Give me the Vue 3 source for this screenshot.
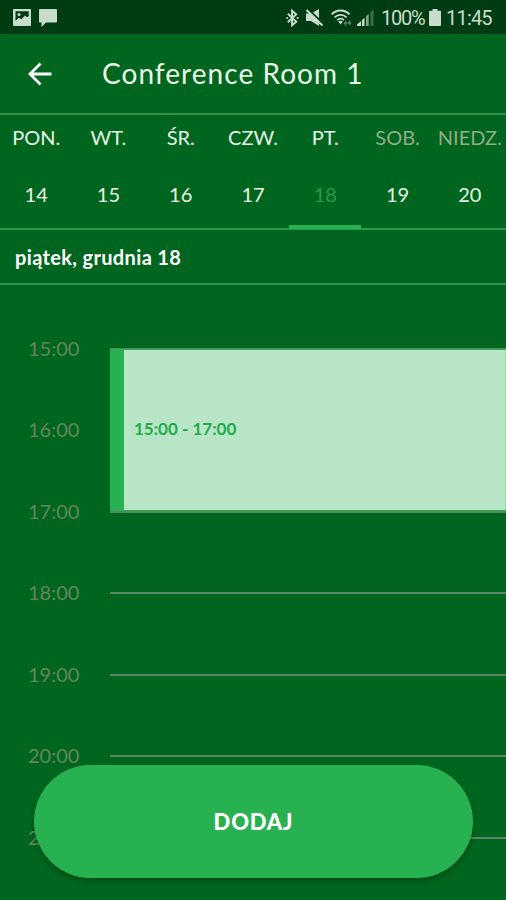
<template>
  <div class="screen">
    <div class="status-bar">
      <div class="status-bar__left">
        <svg class="icon-image" viewBox="0 0 18 17" aria-hidden="true">
          <path fill-rule="evenodd" d="M1 0h16a1 1 0 0 1 1 1v15a1 1 0 0 1-1 1H1a1 1 0 0 1-1-1V1a1 1 0 0 1 1-1Zm1.500 2.300v9.500L6 8.700l2.500 1.500L12 6.500l2 1.700 1.700-1V2.300Z" />
          <circle cx="6" cy="5.500" r="1.500" />
        </svg>
        <svg class="icon-chat" viewBox="0 0 18 18" aria-hidden="true">
          <path d="M1 0h16a1 1 0 0 1 1 1v11.500a1 1 0 0 1-1 1H7L2.500 18v-4.500H1a1 1 0 0 1-1-1V1a1 1 0 0 1 1-1Z" />
        </svg>
      </div>
      <div class="status-bar__right">
        <svg class="icon-bluetooth" viewBox="0 0 14 18" aria-hidden="true">
          <path d="M2 4.500 11 13l-4.500 3.800V1.200L11 5 2 13.500" fill="none" stroke="currentColor" stroke-width="2.100" />
          <circle cx="1.400" cy="9" r="1.200" />
          <circle cx="12.500" cy="9" r="1.200" />
        </svg>
        <svg class="icon-mute" viewBox="0 0 17 17" aria-hidden="true">
          <path d="M0 4.500h5l8-4.500v17l-8-5H0Z" />
          <path d="m2 0 15 14.500" stroke="#003c13" stroke-width="2" />
          <path d="m.5 1 16 15.500" stroke="currentColor" stroke-width="2" />
        </svg>
        <svg class="icon-wifi" viewBox="0 0 23 18" aria-hidden="true">
          <g fill="none" stroke="currentColor" stroke-width="1.900">
            <path d="M.7 5.200c5-5.400 13.600-5.400 18.600 0" />
            <path d="M3.700 8.300c3.500-3.500 9.100-3.500 12.600 0" />
            <path d="M6.500 11.200c2-2 5-2 7 0" />
          </g>
          <path d="m7.600 12.700 2.400 3 2.400-3q-2.400-1.500-4.800 0Z" />
          <path d="m13 15 2.200-3 2.300 3h-1.500v2h-1.600v-2Zm5.500-3.500h1.700v2h1.600L19.400 16.500 17 13.500h1.500Z" opacity=".45" />
        </svg>
        <svg class="icon-signal" viewBox="0 0 17 17" aria-hidden="true">
          <path d="M0 17v-1.500L4 12v5Zm5-6 2.500-2.300V17H5Z" />
          <path d="M9 7.200 11.700 5v12H9Z" opacity=".65" />
          <path d="M13.500 3 16.500 0v17h-3Z" opacity=".3" />
        </svg>
        <span class="status-bar__percent">100%</span>
        <svg class="icon-battery" viewBox="0 0 12 17" aria-hidden="true">
          <path d="M3.500 0h5v1.700H11a1 1 0 0 1 1 1V16a1 1 0 0 1-1 1H1a1 1 0 0 1-1-1V2.700a1 1 0 0 1 1-1h2.500Z" />
        </svg>
        <span class="status-bar__clock">11:45</span>
      </div>
    </div>

    <header class="header">
      <button class="header__back" aria-label="Wstecz">
        <svg viewBox="0 0 24 24" aria-hidden="true">
          <path d="M23.500 12H2.500M12.500 1.500 2 12l10.500 10.500" fill="none" stroke="currentColor" stroke-width="2.800" />
        </svg>
      </button>
      <h1 class="header__title">Conference Room 1</h1>
    </header>

    <nav class="week">
      <div
        v-for="day in days"
        :key="day.date"
        class="day"
        :class="{ 'day--weekend': day.weekend, 'day--active': day.date === selected }"
        @click="selected = day.date"
      >
        <span class="day__name">{{ day.name }}</span>
        <span class="day__date">{{ day.date }}</span>
      </div>
    </nav>

    <div class="current-date">piątek, grudnia 18</div>

    <main class="schedule">
      <div v-for="hour in hours" :key="hour" class="hour">
        <span class="hour__label">{{ hour }}</span>
        <span class="hour__line"></span>
      </div>
      <div class="event"><span>15:00 - 17:00</span></div>
    </main>

    <button class="add-button"><span>DODAJ</span></button>
  </div>
</template>

<script setup>
import { ref } from 'vue'

const selected = ref(18)

const days = [
  { name: 'PON.', date: 14 },
  { name: 'WT.', date: 15 },
  { name: 'ŚR.', date: 16 },
  { name: 'CZW.', date: 17 },
  { name: 'PT.', date: 18 },
  { name: 'SOB.', date: 19, weekend: true },
  { name: 'NIEDZ.', date: 20, weekend: true },
]

const hours = ['15:00', '16:00', '17:00', '18:00', '19:00', '20:00', '21:00']
</script>

<style>
body {
  margin: 0;
  background: #00651e;
}
</style>

<style scoped>
.screen {
  position: relative;
  display: flex;
  flex-direction: column;
  width: 506px;
  height: 900px;
  overflow: hidden;
  background: #00651e;
  color: #e9f5e5;
  font-family: Lato, "Liberation Sans", sans-serif;
}

button {
  border: 0;
  padding: 0;
  font-family: inherit;
}

svg {
  display: block;
  flex-shrink: 0;
  fill: currentColor;
}

.status-bar {
  display: flex;
  justify-content: space-between;
  flex-shrink: 0;
  box-sizing: border-box;
  height: 34px;
  padding: 1px 13px 0;
  background: #003c13;
  color: #c8dccb;
}

.status-bar__left,
.status-bar__right {
  display: flex;
  align-items: center;
}

.status-bar__left {
  gap: 8px;
}

.status-bar__right {
  font-family: Roboto, sans-serif;
  font-size: 20px;
}

.icon-image {
  width: 18px;
  height: 17px;
}

.icon-chat {
  width: 18px;
  height: 18px;
}

.icon-bluetooth {
  width: 13px;
  height: 18px;
  margin-right: 7px;
}

.icon-mute {
  width: 17px;
  height: 17px;
  margin-right: 8px;
}

.icon-wifi {
  width: 22px;
  height: 18px;
  margin-right: 4px;
}

.icon-signal {
  width: 17px;
  height: 17px;
  margin-right: 7px;
}

.icon-battery {
  width: 12px;
  height: 17px;
  margin: 0 5px;
}

.status-bar__percent {
  width: 43px;
  letter-spacing: -1.2px;
}

.status-bar__clock {
  width: 47px;
  letter-spacing: -0.8px;
}

.header {
  display: flex;
  align-items: center;
  flex-shrink: 0;
  box-sizing: border-box;
  height: 81px;
  padding: 0 28px;
  border-bottom: 2px solid #378f4c;
}

.header__back {
  width: 24px;
  height: 24px;
  background: none;
  color: #fff;
}

.header__title {
  margin: -2px 0 0 50px;
  font-size: 28px;
  font-weight: 400;
  letter-spacing: 1.05px;
  white-space: nowrap;
}

.week {
  display: grid;
  grid-template-columns: repeat(7, 1fr);
  flex-shrink: 0;
  box-sizing: border-box;
  height: 115px;
  border-bottom: 2px solid #2a984b;
}

.day {
  position: relative;
  display: flex;
  flex-direction: column;
  align-items: center;
  padding-top: 10px;
  font-size: 20px;
  line-height: 24px;
  white-space: nowrap;
}

.day__date {
  margin-top: 33px;
}

.day--weekend .day__name {
  color: #92ac89;
}

.day--active .day__date {
  color: #27994a;
}

.day--active::after {
  content: "";
  position: absolute;
  right: 0;
  bottom: -1px;
  left: 0;
  height: 4px;
  background: #27b151;
}

.current-date {
  flex-shrink: 0;
  box-sizing: border-box;
  height: 55px;
  padding-left: 15px;
  border-bottom: 2px solid #2a984b;
  color: #fff;
  font-size: 20px;
  font-weight: 700;
  letter-spacing: 0.35px;
  line-height: 55px;
}

.schedule {
  position: relative;
  flex: 1;
  padding-top: 23px;
}

.hour {
  display: flex;
  align-items: center;
  height: 81.5px;
  padding-left: 28px;
}

.hour__label {
  width: 82px;
  margin-top: -2px;
  color: #63865c;
  font-size: 20px;
  line-height: 24px;
}

.hour__line {
  flex: 1;
  height: 2px;
  background: #5b8663;
}

/* spans from the 15:00 line to the 17:00 line */
.event {
  position: absolute;
  top: 64px;
  right: 0;
  left: 110px;
  display: flex;
  box-sizing: border-box;
  height: 162px;
  background: #27b151;
  color: #1fab4b;
  font-size: 17px;
  font-weight: 700;
}

.event span {
  flex: 1;
  margin: 1px 0 1px 14px;
  padding-left: 10px;
  border-right: 1px solid #82e29c;
  background: #b8e5c6;
  line-height: 158px;
}

.add-button {
  position: absolute;
  right: 33px;
  bottom: 22px;
  left: 34px;
  height: 113px;
  border-radius: 57px;
  background: #27b151;
  box-shadow: 0 3px 4px rgba(0, 40, 10, 0.4);
  color: #fff;
  font-size: 22px;
  font-weight: 900;
  letter-spacing: 0.8px;
}
</style>
